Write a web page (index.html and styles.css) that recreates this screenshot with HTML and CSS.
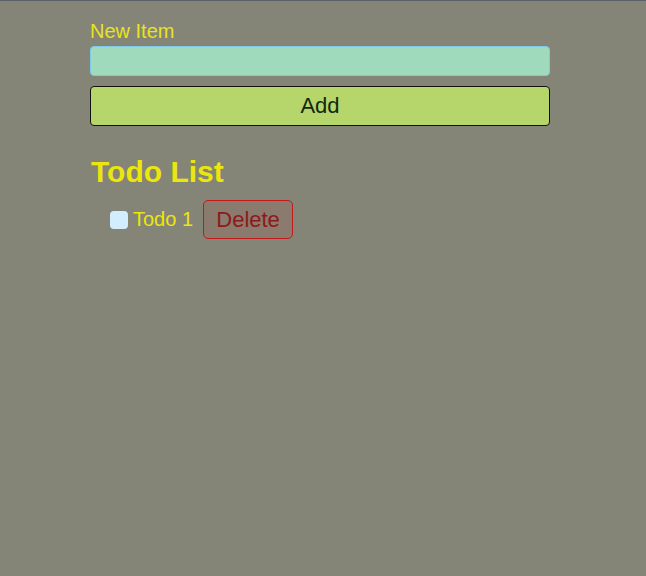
FILE: index.html
```html
<!DOCTYPE html>
<html>
<head>
<meta charset="utf-8">
<link rel="stylesheet" href="styles.css">
</head>
<body>
<div class="topline"></div>
<main class="app">
  <form class="new-form" onsubmit="return false">
    <label class="label" for="item">New Item</label>
    <input class="input" id="item" type="text">
    <button class="add-btn" type="button">Add</button>
  </form>
  <h1 class="title">Todo List</h1>
  <ul class="list">
    <li class="item">
      <span class="check"></span>
      <span class="item-text">Todo 1</span>
      <button class="del-btn" type="button">Delete</button>
    </li>
  </ul>
</main>
</body>
</html>
```
FILE: styles.css
```css
html, body {
  margin: 0;
  padding: 0;
  background: #858577;
  font-family: "Liberation Sans", Arial, sans-serif;
  height: 100%;
}
.topline {
  height: 1px;
  background: #5c6068;
}
.app {
  width: 460px;
  margin: 0 auto 0 90px;
  padding-top: 19px;
}
.new-form {
  display: flex;
  flex-direction: column;
}
.label {
  color: #e8e41a;
  font-size: 20px;
  line-height: 23px;
  margin-bottom: 3px;
}
.input {
  box-sizing: border-box;
  height: 30px;
  background: #9fdabd;
  border: 1px solid #7fc8e8;
  border-radius: 4px;
  margin: 0;
}
.add-btn {
  box-sizing: border-box;
  margin-top: 10px;
  height: 40px;
  background: #b6d66b;
  border: 1px solid #111;
  border-radius: 4px;
  font-family: "Liberation Sans", Arial, sans-serif;
  font-size: 22px;
  color: #0d2a10;
  padding: 0;
}
.title {
  color: #ece60c;
  font-size: 30px;
  font-weight: bold;
  margin: 30px 0 0 1px;
  line-height: 32px;
}
.list {
  list-style: none;
  margin: 12px 0 0;
  padding: 0 0 0 20px;
}
.item {
  display: flex;
  align-items: center;
}
.check {
  width: 18px;
  height: 18px;
  background: #d2edfd;
  border-radius: 4px;
  margin-right: 5px;
}
.item-text {
  color: #ece60c;
  font-size: 20px;
  margin-right: 10px;
}
.del-btn {
  box-sizing: border-box;
  height: 39px;
  width: 90px;
  background: #8b7a6e;
  border: 1px solid #c21a1a;
  border-radius: 5px;
  color: #8c1a1a;
  font-family: "Liberation Sans", Arial, sans-serif;
  font-size: 22px;
  padding: 0;
}
```
